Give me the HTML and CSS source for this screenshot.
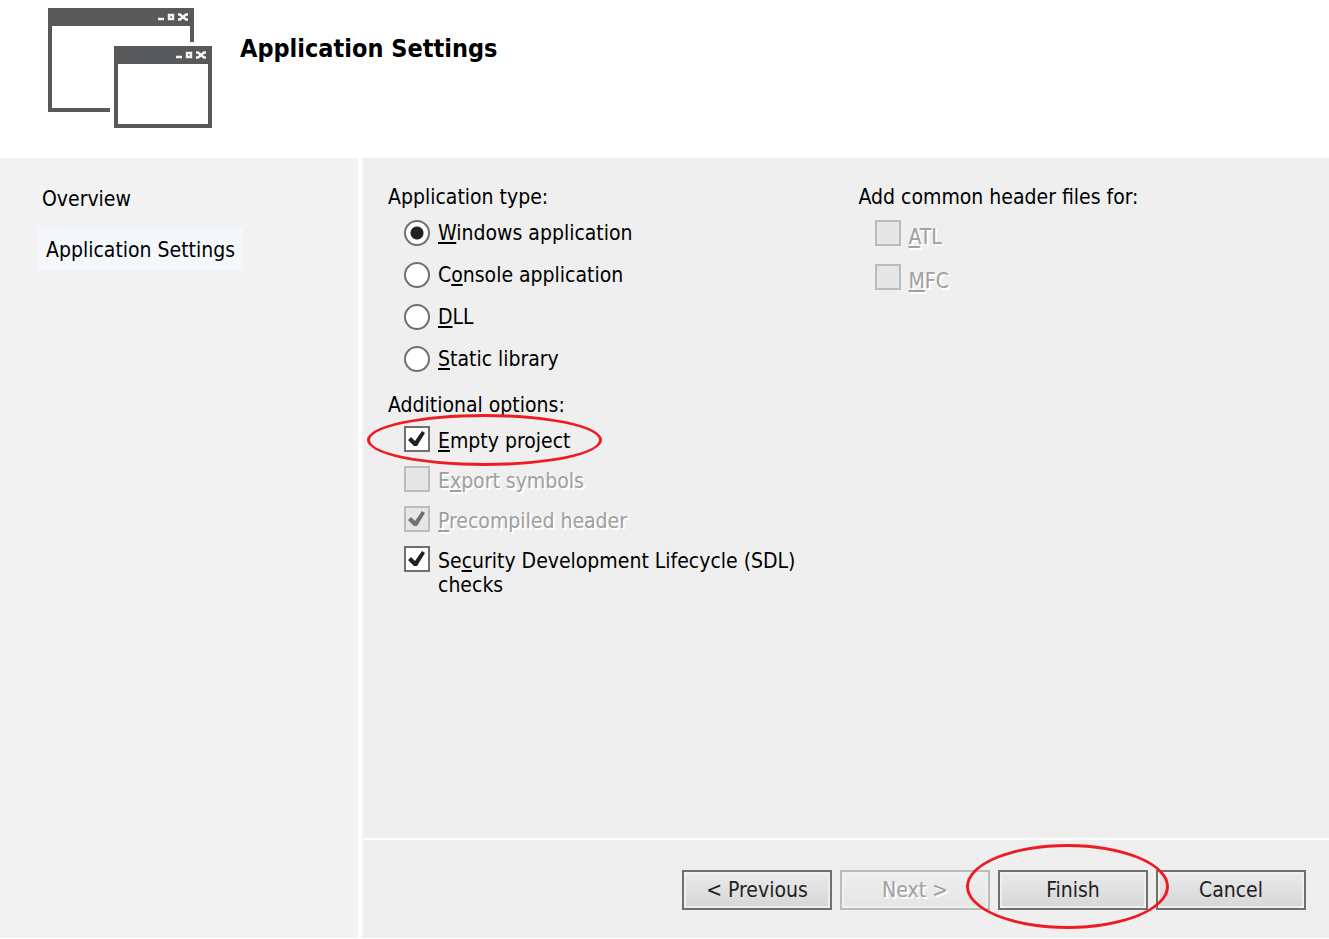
FILE: index.html
```html
<!DOCTYPE html>
<html lang="en">
<head>
<meta charset="utf-8">
<title>Application Settings</title>
<link rel="stylesheet" href="styles.css">
</head>
<body>
<div class="wizard">
  <header class="banner">
    <svg class="logo" width="166" height="122" viewBox="0 0 166 122" aria-hidden="true">
      <path fill="#58595b" d="M0 0h146v34h-4V18H4v82h58v4H0z"/>
      <path fill="#58595b" fill-rule="evenodd" d="M66 38h98v82H66zM70 56v60h90V56z"/>
      <g fill="none" stroke="#f4f4f4" stroke-width="2.400">
        <path d="M110 11h6M121 7h4v4h-4zM130 6.500h2l3 2.500 3-2.500h2M130 11.500h2l3-2.500 3 2.500h2"/>
        <path d="M128 49h6M139 45h4v4h-4zM148 44.500h2l3 2.500 3-2.500h2M148 49.500h2l3-2.500 3 2.500h2"/>
      </g>
    </svg>
    <h1 class="title">Application Settings</h1>
  </header>
  <nav class="sidebar">
    <a class="step" href="#overview">Overview</a>
    <a class="step current" href="#settings" aria-current="page">Application Settings</a>
  </nav>
  <form class="panel">
    <div class="content">
      <div class="column">
        <fieldset class="group radios">
          <legend>Application type:</legend>
          <label class="option"><input type="radio" name="type" checked><span><u>W</u>indows application</span></label>
          <label class="option"><input type="radio" name="type"><span>C<u>o</u>nsole application</span></label>
          <label class="option"><input type="radio" name="type"><span><u>D</u>LL</span></label>
          <label class="option"><input type="radio" name="type"><span><u>S</u>tatic library</span></label>
        </fieldset>
        <fieldset class="group checks">
          <legend>Additional options:</legend>
          <label class="option marked"><input type="checkbox" checked><span><u>E</u>mpty project</span></label>
          <label class="option disabled"><input type="checkbox" disabled><span>E<u>x</u>port symbols</span></label>
          <label class="option disabled"><input type="checkbox" checked disabled><span><u>P</u>recompiled header</span></label>
          <label class="option"><input type="checkbox" checked><span>Se<u>c</u>urity Development Lifecycle (SDL) checks</span></label>
        </fieldset>
      </div>
      <div class="column">
        <fieldset class="group headers">
          <legend>Add common header files for:</legend>
          <label class="option disabled"><input type="checkbox" disabled><span><u>A</u>TL</span></label>
          <label class="option disabled"><input type="checkbox" disabled><span><u>M</u>FC</span></label>
        </fieldset>
      </div>
    </div>
    <footer class="actions">
      <button class="button" type="button">&lt; Previous</button>
      <button class="button" type="button" disabled>Next &gt;</button>
      <div class="finish"><button class="button" type="submit">Finish</button></div>
      <button class="button" type="button">Cancel</button>
    </footer>
  </form>
</div>
</body>
</html>
```
FILE: styles.css
```css
*,
*::before,
*::after {
  box-sizing: border-box;
}

body {
  margin: 0;
  background: #fff;
  color: #000;
  font: 21px/24px "DejaVu Sans Condensed", "DejaVu Sans", sans-serif;
}

.wizard {
  display: grid;
  grid-template-columns: 358px 1fr;
  grid-template-rows: auto 1fr;
  column-gap: 4px;
  min-height: 100vh;
  padding-bottom: 1px;
}

.banner {
  grid-column: 1 / -1;
  display: flex;
  align-items: flex-start;
  gap: 26px;
  padding: 8px 48px 28px;
}

.logo {
  display: block;
}

.title {
  margin: 26px 0 0;
  font-size: 25px;
  line-height: 30px;
}

.sidebar {
  display: flex;
  flex-direction: column;
  align-items: flex-start;
  gap: 13px;
  padding: 25px 38px;
  background: #f3f3f3;
}

.step {
  padding: 4px;
  color: inherit;
  text-decoration: none;
}

.step.current {
  padding: 10px 8px 8px;
  background: #f4f7fc;
}

.panel {
  display: flex;
  flex-direction: column;
  border-left: 2px solid #f3f3f3;
  background: #efefef;
}

.content {
  flex: 1;
  display: grid;
  grid-template-columns: 1fr 1fr;
  padding: 27px 0 26px 24px;
}

.column {
  display: flex;
  flex-direction: column;
  gap: 20px;
}

.group {
  display: flex;
  flex-direction: column;
  margin: 0;
  padding: 0 50px 0 16px;
  border: 0;
}

.group legend {
  margin: 0 0 0 -16px;
  padding: 0 0 11px;
}

.radios {
  gap: 16px;
}

.checks {
  gap: 14px;
}

.checks legend {
  padding: 1px 0 9px;
}

.headers {
  gap: 18px;
}

.option {
  position: relative;
  display: flex;
  align-items: flex-start;
  gap: 8px;
}

.radios span {
  padding-top: 1px;
}

.checks span {
  padding-top: 3px;
  margin-bottom: -1px;
}

.headers span {
  padding-top: 5px;
  margin-bottom: -3px;
}

.option.disabled {
  color: #a0a0a0;
  text-shadow: 2px 2px #fff;
}

u {
  text-decoration-thickness: 2px;
  text-underline-offset: 2px;
  text-decoration-skip-ink: none;
}

input {
  appearance: none;
  flex: none;
  width: 26px;
  height: 26px;
  margin: 0;
  border: 2px solid #707070;
  background: #fff;
}

input[type="radio"] {
  border-radius: 50%;
}

input[type="radio"]:checked {
  background: radial-gradient(circle, #212121 6px, #fff 7px);
}

input[type="checkbox"]:checked::after {
  content: "";
  display: block;
  width: 22px;
  height: 22px;
  background: #212121;
  clip-path: polygon(2px 12px, 5px 9px, 9px 13px, 16px 3px, 19px 5px, 11px 18px, 8px 18px);
}

input:disabled {
  border-color: #bcbcbc;
  background: #e6e6e6;
}

input[type="checkbox"]:disabled:checked::after {
  background: #707070;
}

.marked {
  z-index: 1;
}

.marked::after,
.finish::after {
  content: "";
  position: absolute;
  border: 3px solid #ed1c24;
  border-radius: 50%;
  pointer-events: none;
}

.marked::after {
  left: -37px;
  top: -12px;
  width: 235px;
  height: 52px;
}

.actions {
  display: flex;
  justify-content: flex-end;
  gap: 8px;
  padding: 30px 23px 28px;
  border-top: 2px solid #fff;
}

.finish {
  position: relative;
  z-index: 1;
}

.finish::after {
  left: -32px;
  top: -26px;
  width: 203px;
  height: 85px;
}

.button {
  width: 150px;
  height: 40px;
  padding: 0;
  border: 2px solid #707070;
  border-radius: 0;
  background: linear-gradient(#ebebeb, #d6d6d6);
  box-shadow: inset 0 0 0 2px #f0f0f0;
  color: #212121;
  font: inherit;
}

.button:disabled {
  border-color: #bcbcbc;
  background: linear-gradient(#efefef, #e5e5e5);
  color: #a0a0a0;
  text-shadow: 2px 2px #fff;
}
```
